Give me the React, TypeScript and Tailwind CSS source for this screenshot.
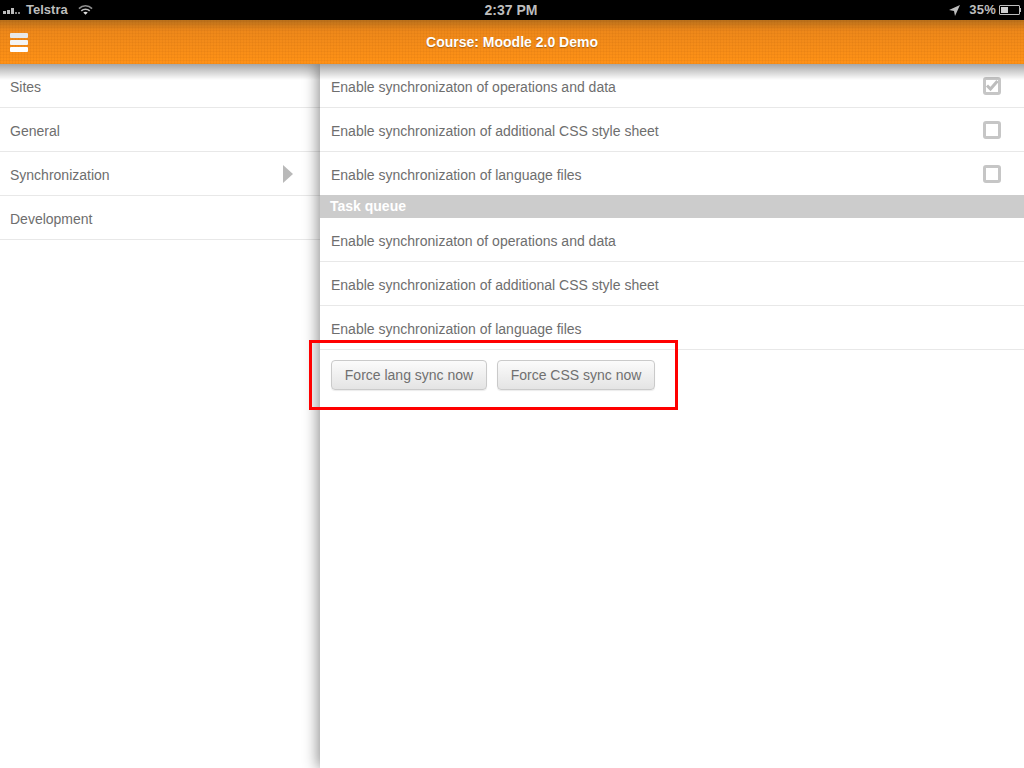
const fontClass = "font-['Liberation_Sans',Arial,sans-serif]"

function SideRow({ label, active }: { label: string; active?: boolean }) {
    return (
        <div className="flex h-11 items-center justify-between border-b border-[#e8e8e8] pl-2.5 pr-[27px] pt-0.5 text-sm text-[#6e6e6e]">
            <span>{label}</span>
            {active && (
                <svg width="10" height="18" viewBox="0 0 10 18" className="-mt-0.5">
                    <path d="M0 0 L10 9 L0 18 Z" fill="#b9b9b9" />
                </svg>
            )}
        </div>
    )
}

function SettingRow({ label, box, checked }: { label: string; box?: boolean; checked?: boolean }) {
    return (
        <div className="flex h-11 items-center justify-between border-b border-[#e8e8e8] pl-[11px] pr-[23px] pt-0.5 text-sm text-[#6e6e6e]">
            <span>{label}</span>
            {box && (
                <div className="-mt-0.5 flex h-[18px] w-[18px] items-center justify-center rounded-[3px] border-[3px] border-[#c6c6c6] bg-white">
                    {checked && (
                        <svg width="14" height="12" viewBox="0 0 14 12" className="shrink-0">
                            <path d="M2 5.5 L5.5 9 L12.5 1" stroke="#bdbdbd" strokeWidth="3" fill="none" />
                        </svg>
                    )}
                </div>
            )}
        </div>
    )
}

function SyncButton({ label, width }: { label: string; width: string }) {
    return (
        <button className={`h-[30px] ${width} rounded-[4px] border border-[#cacaca] bg-gradient-to-b from-[#fbfbfb] to-[#e4e4e4] text-sm text-[#707070] shadow-[0_1px_1px_rgba(0,0,0,0.08)]`}>
            {label}
        </button>
    )
}

export default function App() {
    return (
        <div className={`relative flex h-[768px] w-[1024px] flex-col overflow-hidden bg-white ${fontClass}`}>
            {/* status bar */}
            <div className="flex h-5 items-center justify-between bg-black pl-[3px] pr-[3px] text-sm font-bold text-[#bdbdbd]">
                <div className="flex w-[200px] items-center">
                    <div className="flex items-end gap-px pt-px">
                        <div className="h-[3px] w-[3px] bg-[#bdbdbd]" />
                        <div className="h-1 w-[3px] bg-[#bdbdbd]" />
                        <div className="h-[6px] w-[3px] bg-[#bdbdbd]" />
                        <div className="h-[2px] w-[2px] bg-[#8a8a8a]" />
                        <div className="h-[2px] w-[2px] bg-[#8a8a8a]" />
                    </div>
                    <span className="ml-[6px] text-[13px]">Telstra</span>
                    <svg width="15" height="12" viewBox="0 0 16 12" className="ml-[10px]">
                        <path d="M1 4.5 C5 0.5 11 0.5 15 4.5" stroke="#8f8f8f" strokeWidth="1.7" fill="none" />
                        <path d="M3.5 7 C6 4.6 10 4.6 12.5 7" stroke="#bdbdbd" strokeWidth="1.7" fill="none" />
                        <path d="M8 11 L5.6 8.6 C7 7.5 9 7.5 10.4 8.6 Z" fill="#e0e0e0" />
                    </svg>
                </div>
                <span className="-ml-0.5">2:37 PM</span>
                <div className="flex w-[200px] items-center justify-end gap-[3px]">
                    <svg width="11" height="11" viewBox="0 0 11 11" className="mr-[6px]">
                        <path d="M11 0 L0 5 L5 6 L6 11 Z" fill="#bdbdbd" />
                    </svg>
                    <span className="text-[13px] tracking-[0.2px]">35%</span>
                    <div className="flex items-center">
                        <div className="h-[10px] w-[21px] rounded-[1px] border border-[#bdbdbd] p-px">
                            <div className="h-full w-[7px] bg-[#d0d0d0]" />
                        </div>
                        <div className="h-1 w-px bg-[#bdbdbd]" />
                    </div>
                </div>
            </div>

            {/* header */}
            <div className="relative z-10 flex h-11 items-center justify-center bg-[repeating-linear-gradient(90deg,rgba(150,70,0,0.07)_0px,rgba(150,70,0,0.07)_1px,transparent_1px,transparent_3px),repeating-linear-gradient(0deg,rgba(150,70,0,0.07)_0px,rgba(150,70,0,0.07)_1px,transparent_1px,transparent_3px),linear-gradient(180deg,#b8701c_0%,#ee881a_25%,#ff9216_100%)]">
                <div className="absolute left-2.5 top-[13px] flex w-[18px] flex-col gap-[2px]">
                    <div className="h-[5px] rounded-[1px] bg-[#e8e8e8]" />
                    <div className="h-[5px] rounded-[1px] bg-[#f4f4f4]" />
                    <div className="h-[5px] rounded-[1px] bg-white" />
                </div>
                <span className="text-sm font-bold text-white [text-shadow:0_1px_1px_rgba(0,0,0,0.3)]">Course: Moodle 2.0 Demo</span>
            </div>

            {/* body */}
            <div className="relative flex flex-1">
                <div className="w-80 shrink-0 bg-white">
                    <SideRow label="Sites" />
                    <SideRow label="General" />
                    <SideRow label="Synchronization" active />
                    <SideRow label="Development" />
                </div>
                <div className="flex-1 bg-white shadow-[-2px_0_14px_rgba(0,0,0,0.45)]">
                    <SettingRow label="Enable synchronizaton of operations and data" box checked />
                    <SettingRow label="Enable synchronization of additional CSS style sheet" box />
                    <SettingRow label="Enable synchronization of language files" box />
                    <div className="-mt-px flex h-[23px] items-center bg-[#cccccc] pb-0.5 pl-2.5 text-sm font-bold text-white">Task queue</div>
                    <SettingRow label="Enable synchronizaton of operations and data" />
                    <SettingRow label="Enable synchronization of additional CSS style sheet" />
                    <SettingRow label="Enable synchronization of language files" />
                    <div className="flex gap-2.5 pl-[11px] pt-2.5">
                        <SyncButton label="Force lang sync now" width="w-[156px]" />
                        <SyncButton label="Force CSS sync now" width="w-[158px]" />
                    </div>
                </div>
                {/* shadow under the header */}
                <div className="pointer-events-none absolute inset-x-0 top-0 h-4 bg-gradient-to-b from-[#00000059] to-transparent" />
            </div>

            {/* red annotation box */}
            <div className="pointer-events-none absolute left-[309px] top-[340px] z-20 h-[70px] w-[369px] border-[3px] border-[#ff0000]" />
        </div>
    )
}
